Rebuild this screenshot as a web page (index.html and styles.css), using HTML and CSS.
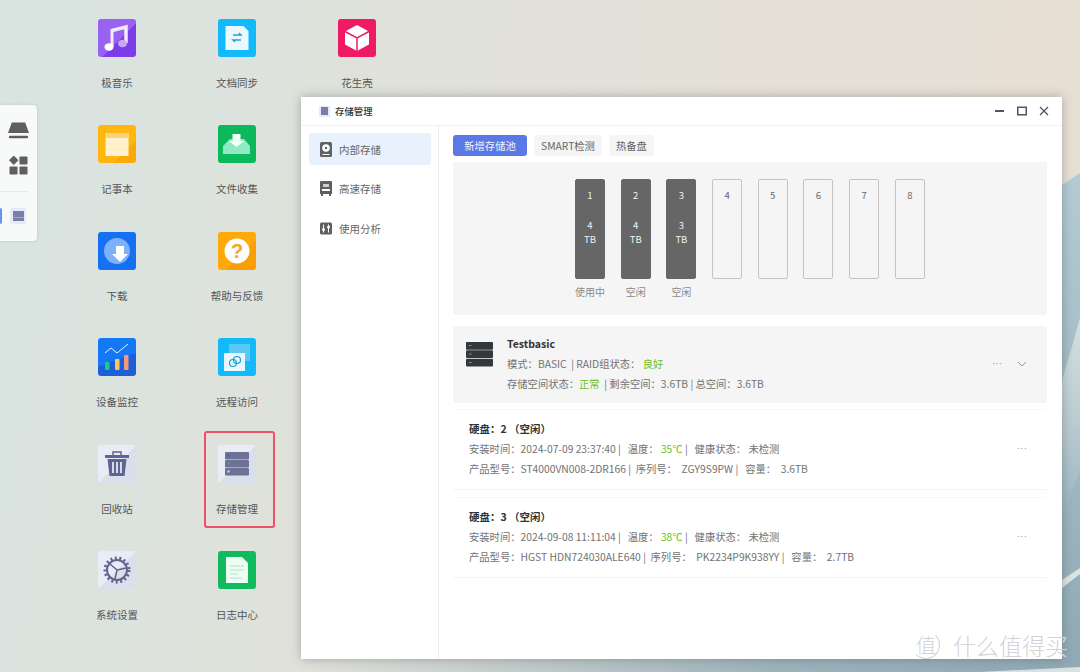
FILE: index.html
```html
<!DOCTYPE html>
<html lang="zh-CN">
<head>
<meta charset="utf-8">
<title>存储管理</title>
<link rel="stylesheet" href="styles.css">
</head>
<body>
<div class="desktop">
  <svg class="wallpaper" viewBox="0 0 1080 672" preserveAspectRatio="none" aria-hidden="true">
    <defs>
      <linearGradient id="sky" x1="0" y1="0" x2="0" y2="1"><stop offset="0" stop-color="#b4cbd3"/><stop offset="1" stop-color="#8fa9b5"/></linearGradient>
      <linearGradient id="floor" x1="0" y1="0" x2="1" y2="0"><stop offset="0" stop-color="#9db3bc" stop-opacity="0"/><stop offset="0.6" stop-color="#9db3bc"/><stop offset="1" stop-color="#8fa9b5"/></linearGradient>
      <linearGradient id="streak" x1="0" y1="0" x2="0" y2="1"><stop offset="0" stop-color="#d3dedf"/><stop offset="1" stop-color="#d3dedf" stop-opacity="0"/></linearGradient>
    </defs>
    <polygon points="1062,185 1080,173 1080,672 1062,672" fill="url(#sky)"/>
    <polygon points="1062,380 1071,350 1080,318 1080,470 1062,520" fill="url(#streak)"/>
    <polygon points="1062,580 1080,568 1080,574 1062,588" fill="#dbe4e4"/>
    <polygon points="300,659 1080,659 1080,672 300,672" fill="url(#floor)"/>
    <polygon points="980,672 1080,667 1080,672" fill="#d9e1e2"/>
  </svg>

  <aside class="dock">
    <svg class="dock-ic" viewBox="0 0 22 18"><path d="M4 0h14l4 11H0z" fill="#5f5f5f"/><rect x="1" y="14" width="20" height="2.5" rx="1" fill="#5f5f5f"/></svg>
    <svg class="dock-ic dock-ic-grid" viewBox="0 0 20 20"><path d="M5 -.5l5 5-5 5-5-5z" fill="#5f5f5f"/><rect x="11" y="0.500" width="8.500" height="8.500" rx="1" fill="#5f5f5f"/><rect x="0.500" y="11" width="8.500" height="8.500" rx="1" fill="#5f5f5f"/><rect x="11" y="11" width="8.500" height="8.500" rx="1" fill="#5f5f5f"/></svg>
    <hr class="dock-sep">
    <div class="dock-running">
      <span class="dock-pip"></span>
      <span class="dock-app"><span class="dock-app-in"></span></span>
    </div>
  </aside>

  <section class="apps">
    <div class="app"><div class="tile t-purple"><svg viewBox="0 0 38 38"><path d="M14 11.500l14-3.500v16" fill="none" stroke="#f3e9ff" stroke-width="3.500"/><path d="M14 10v18" fill="none" stroke="#f3e9ff" stroke-width="3"/><ellipse cx="11" cy="28" rx="4.500" ry="3.800" fill="#fff"/><ellipse cx="24.500" cy="24.500" rx="4.500" ry="3.800" fill="#c6a6f5"/></svg></div><span class="app-name">极音乐</span></div>
    <div class="app"><div class="tile t-cyan"><svg viewBox="0 0 38 38"><path d="M7.500 7h18l5 5v19h-23z" fill="#eaf9ff"/><path d="M15 16h8l-2-2M23 21h-8l2 2" fill="none" stroke="#2a9fd8" stroke-width="1.500"/></svg></div><span class="app-name">文档同步</span></div>
    <div class="app"><div class="tile t-pink"><svg viewBox="0 0 38 38"><path d="M19 6l12 6.500v13L19 32 7 25.500v-13z" fill="#fff"/><path d="M7 12.500l12 6.500 12-6.500M19 19v13" fill="none" stroke="#ee1a63" stroke-width="1.500"/></svg></div><span class="app-name">花生壳</span></div>

    <div class="app"><div class="tile t-amber"><svg viewBox="0 0 38 38"><rect x="7.500" y="8" width="23" height="23" fill="#fff3cf"/><rect x="7.500" y="8" width="23" height="5" fill="#fcd376"/><path d="M7.500 19h23M7.500 25h23" stroke="#fde7ae" stroke-width="0.700"/></svg></div><span class="app-name">记事本</span></div>
    <div class="app"><div class="tile t-green"><svg viewBox="0 0 38 38"><path d="M12 14h14l6 7v8H5v-8z" fill="#8fe9c2"/><path d="M14.500 9h8v7h4l-8 6-8-6h4z" fill="#f0fff8"/></svg></div><span class="app-name">文件收集</span></div>
    <div class="app app-empty"></div>

    <div class="app"><div class="tile t-blue"><svg viewBox="0 0 38 38"><circle cx="19" cy="19" r="13" fill="#7fb0fb"/><path d="M18 14h8v8h4l-8 8-8-8h4z" fill="#fff"/></svg></div><span class="app-name">下载</span></div>
    <div class="app"><div class="tile t-orange"><svg viewBox="0 0 38 38"><circle cx="19" cy="19" r="12.500" fill="#fff"/><text x="19" y="26" class="help-mark">?</text></svg></div><span class="app-name">帮助与反馈</span></div>
    <div class="app app-empty"></div>

    <div class="app"><div class="tile t-blue2"><svg viewBox="0 0 38 38"><path d="M7 15l6-5 6 5 11-9" fill="none" stroke="#eaf3ff" stroke-width="1"/><rect x="7" y="24" width="4.500" height="8" rx="1" fill="#20c78a"/><rect x="17" y="21" width="4.500" height="11" rx="1" fill="#f7c95c"/><rect x="26" y="17" width="4.500" height="15" rx="1" fill="#f29a7c"/></svg></div><span class="app-name">设备监控</span></div>
    <div class="app"><div class="tile t-cyan"><svg viewBox="0 0 38 38"><rect x="11" y="6" width="21" height="17" fill="#5cc8f2"/><rect x="6" y="15" width="21" height="18" fill="#e8f8ff"/><circle cx="15" cy="25" r="3.500" fill="none" stroke="#1a9bd6" stroke-width="1.200"/><circle cx="19" cy="22" r="3.500" fill="none" stroke="#1a9bd6" stroke-width="1.200"/></svg></div><span class="app-name">远程访问</span></div>
    <div class="app app-empty"></div>

    <div class="app"><div class="tile t-pale"><svg viewBox="0 0 38 38"><path d="M7 10h24v3H7z" fill="#5f6490"/><path d="M15 10V7h8v3" fill="none" stroke="#5f6490" stroke-width="1.500"/><path d="M9.500 14h19l-2 17h-15z" fill="#5f6490"/><path d="M15 17v11M19 17v11M23 17v11" stroke="#e6e9f3" stroke-width="1.800"/></svg></div><span class="app-name">回收站</span></div>
    <div class="app app-marked"><div class="tile t-pale"><svg viewBox="0 0 38 38"><rect x="7" y="7" width="24" height="7.500" rx="1" fill="#6d7196"/><rect x="7" y="15" width="24" height="7.500" rx="1" fill="#6d7196"/><rect x="7" y="23" width="24" height="7.500" rx="1" fill="#6d7196"/><rect x="9.500" y="9.500" width="2" height="2" fill="#3d58d0"/><rect x="9.500" y="17.500" width="2" height="2" fill="#55a07a"/><rect x="9.500" y="25.500" width="2" height="2" fill="#e0e4f0"/></svg></div><span class="app-name">存储管理</span></div>
    <div class="app app-empty"></div>

    <div class="app"><div class="tile t-pale"><svg viewBox="0 0 38 38"><circle cx="19" cy="19" r="10" fill="none" stroke="#5f6490" stroke-width="2"/><circle cx="19" cy="19" r="12" fill="none" stroke="#5f6490" stroke-width="3" stroke-dasharray="2 2.500"/><path d="M19 19l-7-6M19 19l9-2M19 19l-2 9" stroke="#5f6490" stroke-width="1.500"/></svg></div><span class="app-name">系统设置</span></div>
    <div class="app"><div class="tile t-green2"><svg viewBox="0 0 38 38"><path d="M8 6h16l6 6v20H8z" fill="#eefcf4"/><path d="M12 15h14M12 19h14M12 23h8M12 27h12" stroke="#a8e8c6" stroke-width="1.200"/></svg></div><span class="app-name">日志中心</span></div>
    <div class="app app-empty"></div>
  </section>

  <section class="window">
    <header class="titlebar">
      <span class="title-ic"><span class="title-ic-in"></span></span>
      <span class="title-text">存储管理</span>
      <div class="win-btns">
        <svg viewBox="0 0 10 10"><rect x="0" y="4" width="9" height="2" fill="#555"/></svg>
        <svg viewBox="0 0 10 10"><rect x="0.750" y="1.250" width="8.500" height="7.500" fill="none" stroke="#555" stroke-width="1.500"/></svg>
        <svg viewBox="0 0 10 10"><path d="M1 1l8 8M9 1l-8 8" stroke="#555" stroke-width="1.300"/></svg>
      </div>
    </header>
    <div class="win-body">
      <nav class="side">
        <a class="nav-item active">
          <svg viewBox="0 0 12 15"><rect width="12" height="15" rx="1.500" fill="#5f6368"/><circle cx="6" cy="6" r="3.800" fill="#fff"/><circle cx="6" cy="6" r="1.200" fill="#5f6368"/><path d="M2.500 12.500h7" stroke="#fff" stroke-width="1"/></svg>
          <span>内部存储</span>
        </a>
        <a class="nav-item">
          <svg viewBox="0 0 12 15"><path d="M1 0h10a1 1 0 0 1 1 1v12H0V1a1 1 0 0 1 1-1z" fill="#5f5f5f"/><rect x="2" y="8" width="8" height="2" fill="#fff"/><rect x="3" y="3" width="6" height="3" fill="#cfcfcf"/><path d="M1 13h2v2H1zM9 13h2v2H9z" fill="#5f5f5f"/></svg>
          <span>高速存储</span>
        </a>
        <a class="nav-item">
          <svg viewBox="0 0 12 12"><rect width="12" height="12" rx="1.500" fill="#5f5f5f"/><path d="M3.500 2v8M8.500 2v8" stroke="#fff" stroke-width="1"/><circle cx="3.500" cy="7" r="1.500" fill="#fff"/><circle cx="8.500" cy="4.500" r="1.500" fill="#fff"/></svg>
          <span>使用分析</span>
        </a>
      </nav>
      <main class="content">
        <div class="tabs">
          <button class="tab primary">新增存储池</button>
          <button class="tab">SMART检测</button>
          <button class="tab">热备盘</button>
        </div>
        <div class="bays">
          <div class="bay-col"><div class="bay used"><span>1</span><span class="bay-size">4<br>TB</span></div><span class="bay-label">使用中</span></div>
          <div class="bay-col"><div class="bay used"><span>2</span><span class="bay-size">4<br>TB</span></div><span class="bay-label">空闲</span></div>
          <div class="bay-col"><div class="bay used"><span>3</span><span class="bay-size">3<br>TB</span></div><span class="bay-label">空闲</span></div>
          <div class="bay-col"><div class="bay"><span>4</span></div></div>
          <div class="bay-col"><div class="bay"><span>5</span></div></div>
          <div class="bay-col"><div class="bay"><span>6</span></div></div>
          <div class="bay-col"><div class="bay"><span>7</span></div></div>
          <div class="bay-col"><div class="bay"><span>8</span></div></div>
        </div>
        <article class="pool">
          <svg class="pool-ic" viewBox="0 0 27 25"><g fill="#35383a"><rect y="0" width="27" height="7.800" rx="1"/><rect y="8.300" width="27" height="7.800" rx="1"/><rect y="16.700" width="27" height="7.800" rx="1"/></g><g fill="#7d9a8a"><rect x="3" y="3" width="2.500" height="1"/><rect x="3" y="11.500" width="2.500" height="1"/><rect x="3" y="20" width="2.500" height="1"/></g></svg>
          <div class="pool-text">
            <h3 class="card-title">Testbasic</h3>
            <p class="meta">模式：BASIC &nbsp;|&nbsp;RAID组状态： <em class="ok">良好</em></p>
            <p class="meta">存储空间状态：<em class="ok">正常</em> &nbsp;| 剩余空间：3.6TB | 总空间：3.6TB</p>
          </div>
          <div class="card-acts"><span class="dots">···</span><svg class="chev" viewBox="0 0 10 6"><path d="M1 1l4 4 4-4" fill="none" stroke="#888" stroke-width="0.900"/></svg></div>
        </article>
        <article class="disk">
          <div>
            <h3 class="card-title">硬盘：2 （空闲）</h3>
            <p class="meta">安装时间：2024-07-09 23:37:40 | &nbsp;&nbsp;温度： <em class="ok">35℃</em> | &nbsp;&nbsp;健康状态： 未检测</p>
            <p class="meta">产品型号：ST4000VN008-2DR166 | &nbsp;序列号： &nbsp;ZGY9S9PW | &nbsp;&nbsp;容量： &nbsp;3.6TB</p>
          </div>
          <span class="dots">···</span>
        </article>
        <article class="disk">
          <div>
            <h3 class="card-title">硬盘：3 （空闲）</h3>
            <p class="meta">安装时间：2024-09-08 11:11:04 | &nbsp;&nbsp;温度： <em class="ok">38℃</em> | &nbsp;&nbsp;健康状态： 未检测</p>
            <p class="meta">产品型号：HGST HDN724030ALE640 | &nbsp;序列号： &nbsp;PK2234P9K938YY | &nbsp;&nbsp;容量： &nbsp;2.7TB</p>
          </div>
          <span class="dots">···</span>
        </article>
      </main>
    </div>
  </section>

  <div class="watermark"><span class="wm-badge">值</span><span>什么值得买</span></div>
</div>
</body>
</html>
```

FILE: styles.css
```css
*, *::before, *::after { box-sizing: border-box; }
html, body { margin: 0; padding: 0; }
body {
  width: 1080px;
  height: 672px;
  overflow: hidden;
  font-family: "Noto Sans CJK SC", "Noto Sans", sans-serif;
  color: #555;
}
.desktop {
  position: relative;
  width: 1080px;
  height: 672px;
  overflow: hidden;
  background: linear-gradient(100deg, #d8e4e1 0%, #dfe2db 30%, #e3e0d8 55%, #e9dfd3 100%);
}
.wallpaper { position: absolute; inset: 0; width: 100%; height: 100%; }

.dock {
  position: absolute;
  left: -4px;
  top: 105px;
  width: 41px;
  height: 136px;
  padding: 17px 0 0 12px;
  display: flex;
  flex-direction: column;
  align-items: flex-start;
  background: #f8f9f9;
  border-radius: 4px;
  box-shadow: 0 0 3px rgba(0, 0, 0, .15);
}
.dock-ic { width: 21px; height: 18px; flex: none; margin-bottom: 16px; }
.dock-ic-grid { height: 19px; margin-bottom: 16px; }
.dock-sep { width: 100%; margin: 0 0 0 -8px; border: 0; border-top: 1px solid #e8e9ea; }
.dock-running { display: flex; align-items: center; gap: 8px; margin: 16px 0 0 -12px; }
.dock-pip { width: 6px; height: 16px; background: #6f8ff0; border-radius: 2px; }
.dock-app { width: 16px; height: 16px; display: flex; align-items: center; justify-content: center; background: #e6e9f8; border-radius: 2px; }
.dock-app-in { width: 11px; height: 10px; background: repeating-linear-gradient(180deg, #7b7fa6 0, #7b7fa6 3px, #a4a7c4 3px, #a4a7c4 3.500px); }

.apps {
  position: absolute;
  left: 57px;
  top: 19px;
  display: grid;
  grid-template-columns: repeat(3, 120px);
  grid-auto-rows: 106.400px;
}
.app { position: relative; display: flex; flex-direction: column; align-items: center; }
.tile { width: 38px; height: 38px; border-radius: 3px; overflow: hidden; }
.tile svg { display: block; width: 38px; height: 38px; }
.app-name { margin-top: 17px; font-size: 10.500px; line-height: 17px; color: #555; white-space: nowrap; }
.app-marked::after {
  content: "";
  position: absolute;
  left: 27px;
  top: -14px;
  width: 71px;
  height: 97px;
  border: 2px solid #ee5065;
  border-radius: 3px;
}
.t-purple { background: linear-gradient(135deg, #9a62f3 55%, #7c3ce8 56%); }
.t-cyan { background: #12b9fb; }
.t-pink { background: #ee1a63; }
.t-amber { background: linear-gradient(135deg, #ffb70f 70%, #fba90a 71%); }
.t-green { background: #0cb95a; }
.t-blue { background: #1570f2; }
.t-orange { background: linear-gradient(135deg, #ffaa0a 60%, #fb9e05 61%); }
.t-blue2 { background: linear-gradient(160deg, #1478f5 55%, #1d5fd8 56%); }
.t-pale { background: linear-gradient(135deg, #e9ecf5 50%, #dadfec 51%); }
.t-green2 { background: #0fbb5c; }
.help-mark { font: 700 20px "Liberation Sans", sans-serif; fill: #f5a623; text-anchor: middle; }

.window {
  position: absolute;
  left: 301px;
  top: 97px;
  width: 761px;
  height: 562px;
  display: flex;
  flex-direction: column;
  background: #fff;
  box-shadow: 0 0 10px rgba(60, 60, 60, .35);
}
.titlebar {
  height: 29px;
  flex: none;
  display: flex;
  align-items: center;
  padding: 0 13px 0 18px;
  border-bottom: 1px solid #f1f1f1;
}
.title-ic { width: 11px; height: 11px; display: flex; align-items: center; justify-content: center; background: #e6e9f8; }
.title-ic-in { width: 7px; height: 8px; background: #7b7fa6; }
.title-text { margin-left: 5px; font-size: 9.400px; font-weight: 500; color: #333; }
.win-btns { margin-left: auto; display: flex; gap: 12px; }
.win-btns svg { width: 10px; height: 10px; }

.win-body { flex: 1; display: flex; min-height: 0; }
.side {
  width: 138px;
  flex: none;
  padding: 7px 7px 0 8px;
  border-right: 1px solid #efefef;
  display: flex;
  flex-direction: column;
  gap: 7.500px;
}
.nav-item {
  height: 32px;
  display: flex;
  align-items: center;
  gap: 7px;
  padding-left: 11px;
  font-size: 10.500px;
  color: #666;
  border-radius: 3px;
}
.nav-item svg { width: 12px; height: 15px; flex: none; }
.nav-item.active { background: #e8f2fd; }

.content { flex: 1; min-width: 0; padding: 9px 15px 0 14px; display: flex; flex-direction: column; }
.tabs { display: flex; gap: 7px; height: 21px; }
.tab {
  height: 21px;
  padding: 0 7px;
  border: 0;
  border-radius: 3px;
  background: #f5f5f5;
  font: 400 10.300px "Noto Sans CJK SC", "Noto Sans", sans-serif;
  color: #666;
}
.tab.primary { width: 74px; background: #5b79e4; color: #f2f4ff; }

.bays {
  height: 153px;
  margin-top: 6px;
  padding: 17px 0 0 122px;
  display: flex;
  gap: 15.700px;
  background: #f5f5f5;
  border-radius: 3px;
}
.bay-col { width: 30px; display: flex; flex-direction: column; align-items: center; }
.bay {
  width: 30px;
  height: 100px;
  padding-top: 8px;
  display: flex;
  flex-direction: column;
  align-items: center;
  border: 1px solid #c4c4c4;
  border-radius: 2px;
  font-size: 9.500px;
  line-height: 14.500px;
  color: #666;
}
.bay.used { background: #666; border-color: #666; color: #f1f1f1; }
.bay-size { margin-top: 15px; text-align: center; }
.bay-label { margin-top: 6px; font-size: 10px; line-height: 14px; color: #888; white-space: nowrap; }

.pool {
  height: 77px;
  margin-top: 11px;
  padding: 10px 20px 0 13px;
  display: flex;
  background: #f5f5f5;
  border-radius: 2px;
}
.pool-ic { width: 27px; height: 25px; margin: 6px 14px 0 0; flex: none; }
.pool-text { flex: 1; }
.card-title { margin: 0 0 2px; font-size: 10.500px; line-height: 16px; font-weight: 700; color: #333; }
.meta { margin: 0; font-size: 10.300px; line-height: 19.500px; color: #727272; white-space: nowrap; }
.ok { font-style: normal; color: #6cbf1a; }
.card-acts { display: flex; align-items: center; gap: 15px; height: 56px; }
.dots { font-family: "Liberation Sans", sans-serif; font-size: 10px; line-height: 1; color: #999; }
.chev { width: 10px; height: 6px; }

.disk {
  height: 80px;
  margin-top: 7px;
  padding: 11px 20px 0 16px;
  display: flex;
  justify-content: space-between;
  border-bottom: 1px solid #f4f4f4;
  box-shadow: 0 -1px 0 #f7f7f7;
}
.disk + .disk { margin-top: 8px; }
.disk .dots { margin-top: 23px; }

.watermark {
  position: absolute;
  right: 12px;
  bottom: 12px;
  display: flex;
  align-items: center;
  gap: 13px;
  font-size: 23px;
  font-weight: 300;
  line-height: 30px;
  color: rgba(205, 205, 205, .9);
  text-shadow: 0 0 1px rgba(255, 255, 255, .7);
}
.wm-badge {
  width: 28px;
  height: 28px;
  border-radius: 50%;
  border: 1px solid rgba(205, 205, 205, .9);
  border-left-color: transparent;
  border-top-color: transparent;
  font-size: 20px;
  line-height: 26px;
  text-align: center;
}
```
